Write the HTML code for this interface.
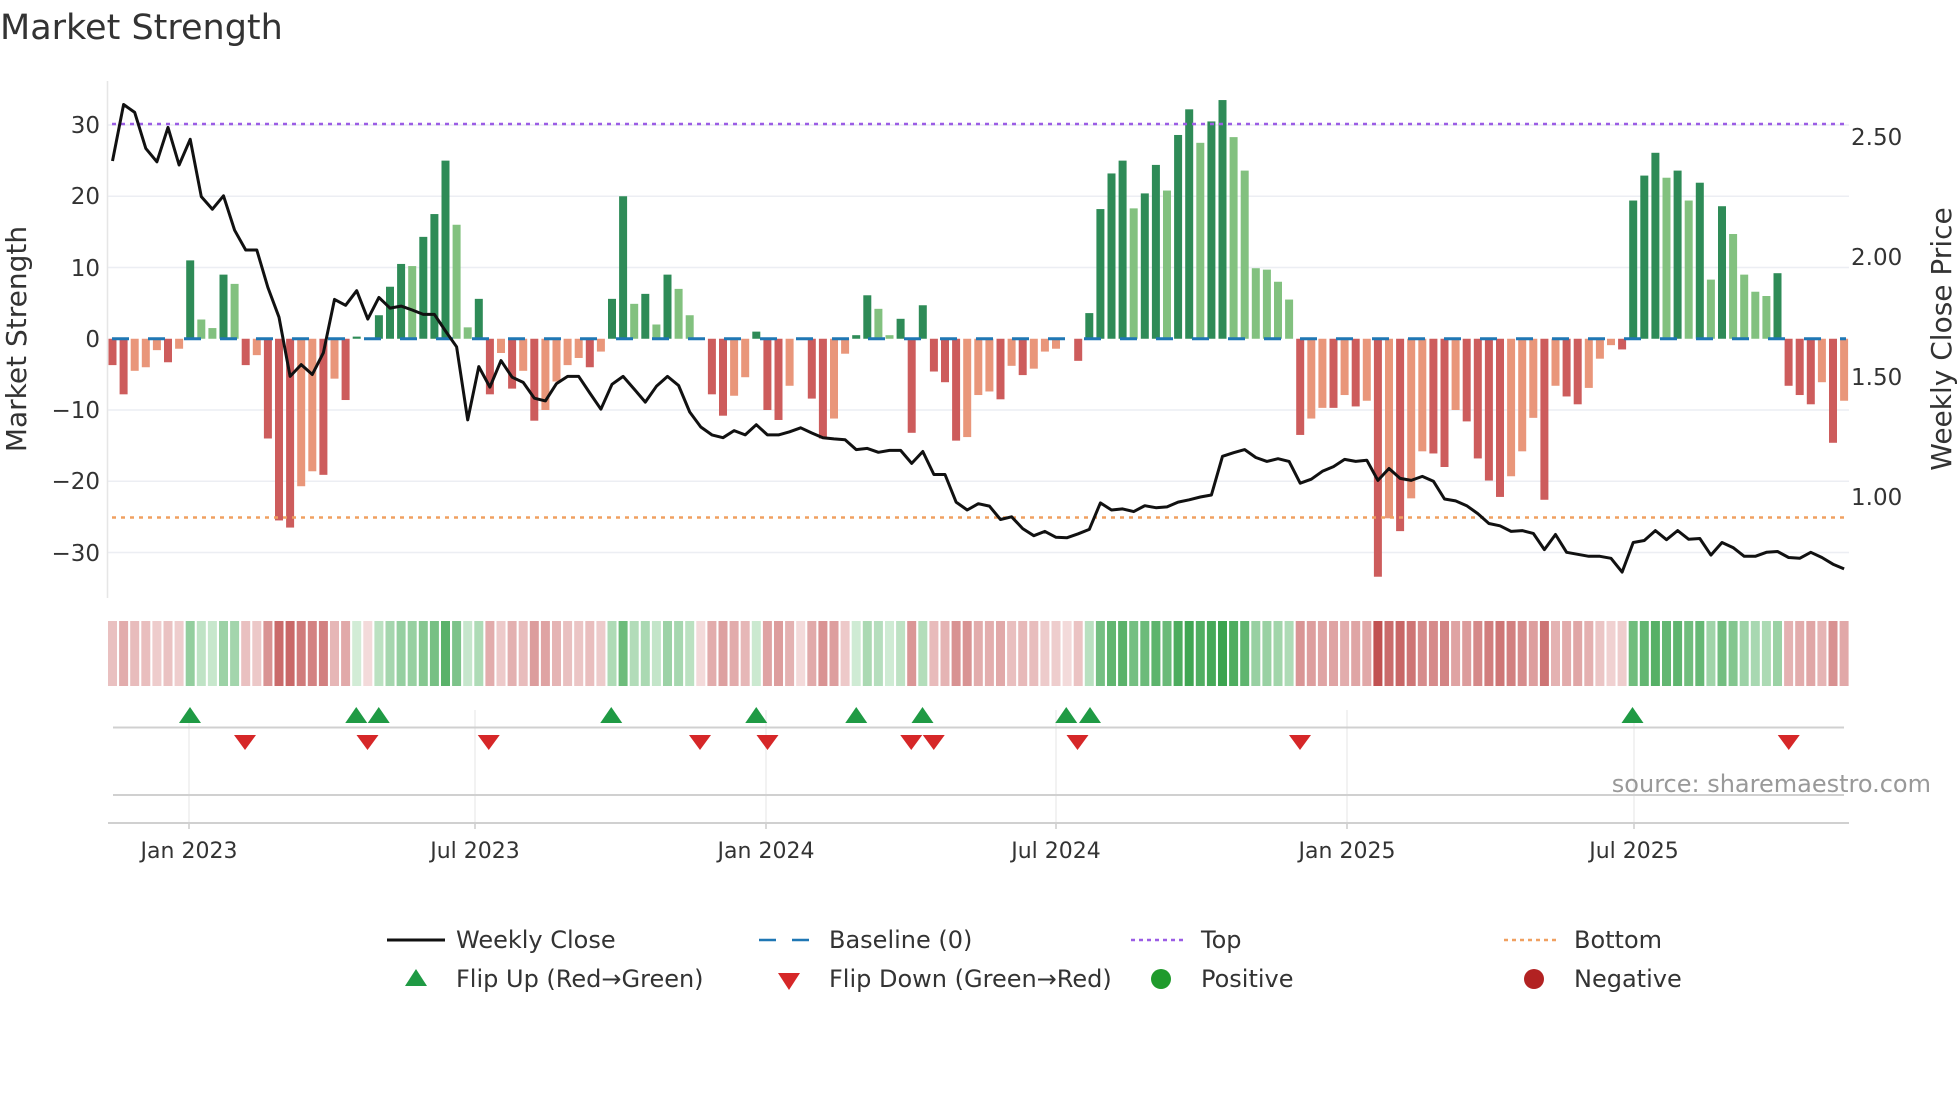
<!DOCTYPE html>
<html><head><meta charset="utf-8">
<style>
html,body{margin:0;padding:0;background:#fff;}
body{width:1960px;height:1102px;overflow:hidden;position:relative;font-family:"DejaVu Sans","Liberation Sans",sans-serif;color:#2a2a2a;}
svg text{font-family:"DejaVu Sans","Liberation Sans",sans-serif;}
</style></head><body>
<svg id="s" width="1960" height="1102" viewBox="0 0 1960 1102" xmlns="http://www.w3.org/2000/svg">
<text x="0" y="39" font-size="35" fill="#333">Market Strength</text>
<g id="grid"></g>
<g id="bars"></g>
<g id="heat"></g>
<g id="mk"></g>
<g font-size="23" fill="#333" text-anchor="end">
<text x="100" y="133">30</text><text x="100" y="204">20</text><text x="100" y="276">10</text><text x="100" y="347">0</text><text x="100" y="418">−10</text><text x="100" y="489">−20</text><text x="100" y="561">−30</text>
</g>
<g font-size="23" fill="#333">
<text x="1851" y="145">2.50</text><text x="1851" y="265">2.00</text><text x="1851" y="385">1.50</text><text x="1851" y="505">1.00</text>
</g>
<text transform="translate(26,339) rotate(-90)" font-size="28" fill="#333" text-anchor="middle">Market Strength</text>
<text transform="translate(1951,339) rotate(-90)" font-size="28" fill="#333" text-anchor="middle">Weekly Close Price</text>
<g font-size="22" fill="#333" text-anchor="middle">
<text x="189" y="858">Jan 2023</text><text x="475" y="858">Jul 2023</text><text x="766" y="858">Jan 2024</text><text x="1056" y="858">Jul 2024</text><text x="1347" y="858">Jan 2025</text><text x="1634" y="858">Jul 2025</text>
</g>
<text x="1931" y="792" font-size="24" fill="#999" text-anchor="end">source: sharemaestro.com</text>
<g font-size="24" fill="#333">
<line x1="387" y1="940" x2="445" y2="940" stroke="#111" stroke-width="3"/>
<text x="456" y="948">Weekly Close</text>
<line x1="759" y1="940" x2="814" y2="940" stroke="#1f77b4" stroke-width="2.5" stroke-dasharray="17,16"/>
<text x="829" y="948">Baseline (0)</text>
<line x1="1131" y1="940" x2="1186" y2="940" stroke="#9b5de5" stroke-width="2.5" stroke-dasharray="4,4"/>
<text x="1201" y="948">Top</text>
<line x1="1504" y1="940" x2="1559" y2="940" stroke="#f0a060" stroke-width="2.5" stroke-dasharray="4,4"/>
<text x="1574" y="948">Bottom</text>
<polygon points="405,986 427,986 416,969" fill="#1f9a44"/>
<text x="456" y="987">Flip Up (Red→Green)</text>
<polygon points="778,973 800,973 789,990" fill="#d62728"/>
<text x="829" y="987">Flip Down (Green→Red)</text>
<circle cx="1161" cy="979" r="10" fill="#1f9a2c"/>
<text x="1201" y="987">Positive</text>
<circle cx="1534" cy="979" r="10" fill="#b22222"/>
<text x="1574" y="987">Negative</text>
</g>
</svg>
<script>
var NS="http://www.w3.org/2000/svg";
function el(p,t,a){var e=document.createElementNS(NS,t);for(var k in a)e.setAttribute(k,a[k]);p.appendChild(e);return e;}
var V=[-3.7,-7.8,-4.5,-4,-1.6,-3.3,-1.4,11,2.7,1.5,9,7.7,-3.7,-2.3,-14,-25.5,-26.5,-20.7,-18.6,-19.1,-5.6,-8.6,0.3,0,3.3,7.3,10.5,10.2,14.3,17.5,25,16,1.6,5.6,
-7.8,-2,-7,-4.5,-11.5,-10,-6,-3.7,-2.7,-4,-1.8,5.6,20,4.9,6.3,2,9,7,3.3,0,-7.8,-10.8,-8,-5.4,1,-10,-11.4,-6.6,
0,-8.4,-14,-11.2,-2.1,0.5,6.1,4.2,0.5,2.8,-13.2,4.7,-4.6,-6.1,-14.3,-13.8,-7.9,-7.4,-8.5,-3.8,-5.1,-4.2,-1.8,-1.4,0,-3.1,3.6,18.2,23.2,25,18.3,20.4,24.4,20.8,28.6,32.2,27.5,30.5,33.5,28.3,23.6,9.9,9.7,8,5.5,-13.5,-11.2,-9.7,-9.7,-7.9,-9.5,-8.7,
-33.4,-25.2,-27,-22.4,-15.8,-16.1,-18,-10,-11.6,-16.8,-19.9,-22.2,-19.3,-15.8,-11.1,-22.6,-6.6,-8.1,-9.2,-6.9,-2.8,-0.9,-1.5,19.4,22.9,26.1,22.6,23.6,19.4,21.9,8.3,18.6,14.7,9,6.6,6,9.2,-6.6,-7.9,-9.2,-6.1,-14.6,-8.7];
var D=[1,1,0,0,0,1,0,1,0,0,1,0,1,0,1,1,1,0,0,1,0,1,1,0,1,1,1,0,1,1,1,0,0,1,
1,0,1,0,1,0,0,0,0,1,0,1,1,0,1,0,1,0,0,0,1,1,0,0,1,1,1,0,
0,1,1,0,0,1,1,0,0,1,1,1,1,1,1,0,0,0,1,0,1,0,0,0,0,1,1,1,1,1,0,1,1,0,1,1,0,1,1,0,0,0,0,0,0,1,0,0,1,0,1,0,
1,0,1,0,0,1,1,0,1,1,1,1,0,0,0,1,0,1,1,0,0,0,1,1,1,1,0,1,0,1,0,1,0,0,0,0,1,1,1,1,0,1,0];
var ZY=[205,62,82,173,207,120,215,150,295,327,293,380,430,430,525,600,750,720,745,690,555,570,533,605,550,577,572,582,593,593,635,675,860,725,777,710,752,765,805,812,768,750,750,792,833,770,750,782,815,775,750,773,840,878,898,905,887,898,872,898,898,890,
880,893,905,908,910,935,932,942,937,937,970,940,998,998,1068,1088,1072,1078,1112,1105,1135,1153,1142,1157,1158,1148,1137,1070,1088,1085,1092,1077,1082,1080,1068,1062,1055,1050,952,943,935,955,965,958,965,1020,1010,990,978,960,965,962,
1013,983,1008,1013,1003,1015,1060,1065,1077,1097,1122,1128,1142,1140,1147,1188,1150,1195,1200,1205,1205,1210,1245,1170,1165,1140,1163,1140,1162,1160,1202,1170,1183,1205,1205,1195,1193,1208,1210,1195,1208,1225,1237];
var X0=112.5,DX=11.1,Y0=338.75,U=7.125;
var g=document.getElementById('grid'),b=document.getElementById('bars'),h=document.getElementById('heat'),m=document.getElementById('mk');
for(var v=-30;v<=30;v+=10){if(v!=0)el(g,'line',{x1:108,x2:1849,y1:Y0-v*U,y2:Y0-v*U,stroke:'#eceef3','stroke-width':1.5});}
el(g,'line',{x1:107.5,x2:107.5,y1:81,y2:598,stroke:'#e6e6e6','stroke-width':1.5});
[189,475,766,1056,1347,1634].forEach(function(x){el(g,'line',{x1:x,x2:x,y1:710,y2:823,stroke:'#eeeeee','stroke-width':1.5});el(g,'line',{x1:x,x2:x,y1:823,y2:829,stroke:'#ccc','stroke-width':1.5});});
el(g,'line',{x1:113,x2:1844,y1:727.5,y2:727.5,stroke:'#d0d0d0','stroke-width':2});
el(g,'line',{x1:113,x2:1844,y1:795,y2:795,stroke:'#d0d0d0','stroke-width':2});
el(g,'line',{x1:108,x2:1849,y1:823,y2:823,stroke:'#d0d0d0','stroke-width':2});
for(var i=0;i<V.length;i++){
 var x=X0+DX*i,val=V[i],d=D[i];
 if(Math.abs(val)>0.05){
  var c=val>0?(d?'#2e8b57':'#82c17f'):(d?'#cd5c5c':'#e9967a');
  var y=val>0?Y0-val*U:Y0,hh=Math.abs(val)*U;
  el(b,'rect',{x:x-4,y:y,width:8,height:hh,fill:c});
 }
 var t=Math.pow(Math.min(Math.abs(val)/34,1),0.75);
 var lo=val>0?[214,238,218]:[243,218,218],hi=val>0?[58,163,77]:[192,80,80];
 var col='rgb('+lo.map(function(a,k){return Math.round(a+(hi[k]-a)*t)}).join(',')+')';
 el(h,'rect',{x:x-4.5,y:621,width:9,height:65,fill:col});
}
el(b,'line',{x1:112,x2:1846,y1:Y0,y2:Y0,stroke:'#1f77b4','stroke-width':3,'stroke-dasharray':'17,19'});
el(b,'line',{x1:112,x2:1846,y1:124,y2:124,stroke:'#9b5de5','stroke-width':2.5,'stroke-dasharray':'4,5'});
el(b,'line',{x1:112,x2:1846,y1:517.5,y2:517.5,stroke:'#f0a060','stroke-width':2.5,'stroke-dasharray':'4,5'});
var pts=[];for(var i=0;i<ZY.length;i++)pts.push((X0+DX*i).toFixed(1)+','+(80+ZY[i]/2.53).toFixed(1));
el(b,'polyline',{points:pts.join(' '),fill:'none',stroke:'#111','stroke-width':3,'stroke-linejoin':'round'});
[152,285,303,489,605,685,738,853,872,1306].forEach(function(x){x*=1.25;el(m,'polygon',{points:(x-11)+',723 '+(x+11)+',723 '+x+',707',fill:'#1f9a44'});});
[196,294,391,560,614,729,747,862,1040,1431].forEach(function(x){x*=1.25;el(m,'polygon',{points:(x-11)+',735 '+(x+11)+',735 '+x+',750',fill:'#d62728'});});
</script>
</body></html>
